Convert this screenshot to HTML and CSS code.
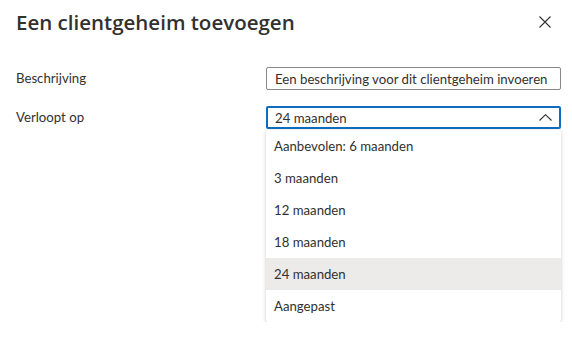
FILE: index.html
```html
<!DOCTYPE html>
<html lang="nl">
<head>
  <meta charset="UTF-8" />
  <title>Een clientgeheim toevoegen</title>
  <link rel="stylesheet" href="styles.css">
</head>
<body>
  <div class="panel">
    <div class="header">
      <h1>Een clientgeheim toevoegen</h1>
      <button class="close" aria-label="Sluiten">
        <svg width="12" height="12" viewBox="0 0 12 12"><path d="M0.5 0.5L11.5 11.5M11.5 0.5L0.5 11.5" stroke="#323130" stroke-width="1.1" fill="none"/></svg>
      </button>
    </div>

    <div class="row">
      <label>Beschrijving</label>
      <div class="field">
        <input type="text" class="text-input" placeholder="Een beschrijving voor dit clientgeheim invoeren" />
      </div>
    </div>

    <div class="row">
      <label>Verloopt op</label>
      <div class="field">
        <div class="dropdown">
          <span>24 maanden</span>
          <svg width="13" height="7" viewBox="0 0 13 7"><path d="M0.5 6.5L6.5 0.7L12.5 6.5" stroke="#323130" stroke-width="1.1" fill="none"/></svg>
        </div>
        <ul class="options">
          <li>Aanbevolen: 6 maanden</li>
          <li>3 maanden</li>
          <li>12 maanden</li>
          <li>18 maanden</li>
          <li class="selected">24 maanden</li>
          <li>Aangepast</li>
        </ul>
      </div>
    </div>
  </div>
</body>
</html>
```

FILE: styles.css
```css
* {
  box-sizing: border-box;
  font-family: Lato, 'Open Sans', sans-serif;
}

body {
  margin: 0;
  background: #fff;
  color: #323130;
}

.panel {
  padding: 0 11px 0 16px;
}

.header {
  display: flex;
  justify-content: space-between;
  align-items: center;
  height: 44px;
}

h1 {
  margin: 0;
  font-family: 'Open Sans', sans-serif;
  font-size: 20.5px;
  font-weight: 600;
  color: #323130;
}

.close {
  border: none;
  background: none;
  padding: 0;
  width: 12px;
  height: 12px;
  margin-right: 10px;
  display: flex;
}

.row {
  display: flex;
  margin-top: 23px;
}

.row + .row {
  margin-top: 16px;
}

label {
  width: 250px;
  font-size: 13.2px;
  line-height: 23px;
}

.field {
  width: 295px;
}

.text-input {
  width: 100%;
  height: 23px;
  border: 1px solid #8a8886;
  border-radius: 2px;
  padding: 0 8px;
  font-size: 13.2px;
  color: #323130;
  outline: none;
}

.text-input::placeholder {
  color: #323130;
}

.dropdown {
  height: 23px;
  border: 2px solid #0f6cbd;
  border-radius: 2px;
  padding: 0 7px;
  display: flex;
  justify-content: space-between;
  align-items: center;
  font-size: 13.2px;
}

.options {
  list-style: none;
  margin: 1px 0 0;
  padding: 0;
  background: #fff;
  border-radius: 2px;
  box-shadow: 0 1px 4px rgba(0, 0, 0, 0.18), 0 0 1px rgba(0, 0, 0, 0.12);
}

.options li {
  height: 32px;
  line-height: 32px;
  padding: 0 8px;
  font-size: 13.2px;
}

.options li.selected {
  background: #edebe9;
}
```
